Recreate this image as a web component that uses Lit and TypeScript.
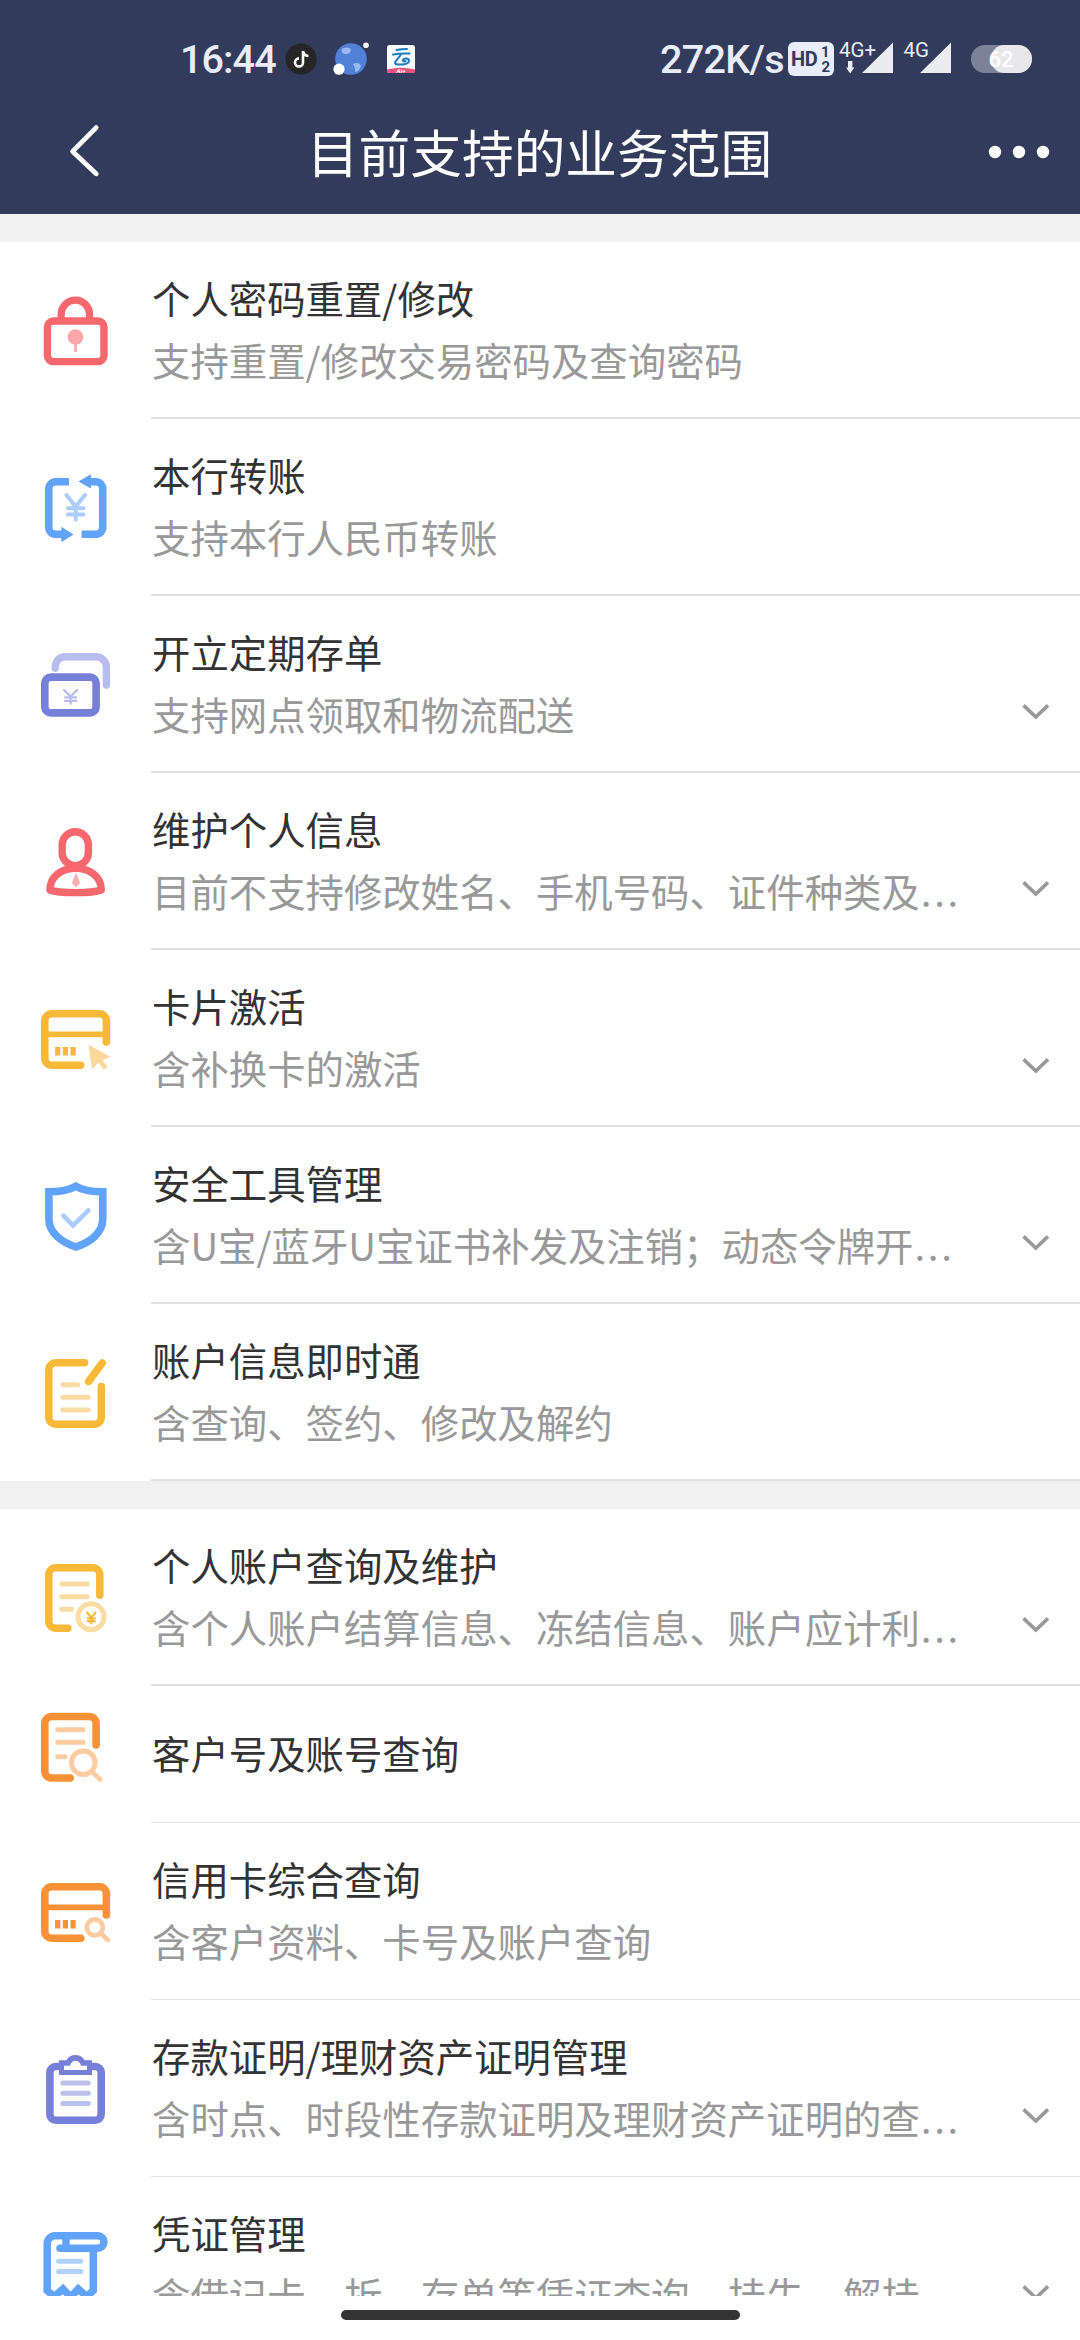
import { LitElement, html, svg, css, SVGTemplateResult } from "lit";
import { customElement, property } from "lit/decorators.js";

const yen = (cx: number, top: number, w: number, h: number, sw: number, color: string) => svg`
  <path d="M${cx - w / 2} ${top} L${cx} ${top + h * 0.48} L${cx + w / 2} ${top}
           M${cx} ${top + h * 0.48} V${top + h}
           M${cx - w * 0.42} ${top + h * 0.54} H${cx + w * 0.42}
           M${cx - w * 0.42} ${top + h * 0.8} H${cx + w * 0.42}"
    fill="none" stroke=${color} stroke-width=${sw} stroke-linecap="round" stroke-linejoin="round"/>`;

const bars = (rows: number[][], color: string, sw = 5) =>
  rows.map(([x1, x2, y]) => svg`<path d="M${x1} ${y} H${x2}" stroke=${color} stroke-width=${sw} stroke-linecap="round"/>`);

const card = (color: string) => svg`
  <path d="M73.4 46 V24.8 a7 7 0 0 0 -7 -7 H18.8 a7 7 0 0 0 -7 7 V62.2 a7 7 0 0 0 7 7 H47.8"
    fill="none" stroke=${color} stroke-width="7.6" stroke-linecap="round"/>
  <path d="M12 38.4 H73" stroke=${color} stroke-width="5.6"/>
  <path d="M22.1 51 h5.2 v8.4 h-5.2z M29.8 51 h5.2 v8.4 h-5.2z M37.5 51 h5.2 v8.4 h-5.2z" fill=${color}/>`;

const ICONS: Record<string, SVGTemplateResult> = {
  lock: svg`
    <path d="M28.2 32 V26.4 a14.2 14.2 0 0 1 28.4 0 V32" fill="none" stroke="#f6686d" stroke-width="7.2"/>
    <rect x="14.4" y="33" width="56.6" height="40.6" rx="6" fill="none" stroke="#f6686d" stroke-width="7.4"/>
    <circle cx="42.5" cy="49" r="7.8" fill="#fca6aa"/>
    <path d="M42.5 55 V64" stroke="#fca6aa" stroke-width="2.6"/>`,
  transfer: svg`
    <path d="M36 16.8 H22.8 a7 7 0 0 0 -7 7 V62.3 a7 7 0 0 0 7 7 H30" fill="none" stroke="#60a3f8" stroke-width="7.6"/>
    <path d="M28.3 61.7 L40.5 69.4 L28.3 77.3z M57.9 9.2 L45.5 16.4 L57.9 23.6z" fill="#60a3f8"/>
    <path d="M48.6 69.3 H62.7 a7 7 0 0 0 7 -7 V23.8 a7 7 0 0 0 -7 -7 H56" fill="none" stroke="#60a3f8" stroke-width="7.6"/>
    ${yen(42.7, 30, 18.5, 24.4, 4, "#abcdfb")}`,
  deposit: svg`
    <path d="M22.2 26.2 C22.2 18.5 26.5 14.8 32.5 14.8 H63 a10.4 10.4 0 0 1 10.4 10.4 V43" fill="none" stroke="#b8bdee" stroke-width="7.4" stroke-linecap="round"/>
    <rect x="11.8" y="35.1" width="51.3" height="35.8" rx="6" fill="#fff" stroke="#7780d9" stroke-width="7.6"/>
    ${yen(37.6, 48, 13, 13.6, 2.4, "#b8bdee")}`,
  person: svg`
    <rect x="29.2" y="12.8" width="26.2" height="34" rx="13.1" fill="none" stroke="#f6686d" stroke-width="7.4"/>
    <path d="M16.9 71 C16.9 57 29 49.4 42.6 49.4 S68.3 57 68.3 71 C59 74.5 26 74.5 16.9 71z" fill="none" stroke="#f6686d" stroke-width="7.4" stroke-linejoin="round"/>
    <path d="M43 53.5 L39 64 L43 68.4 L47 64z" fill="#fbadb0"/>`,
  activate: svg`
    ${card("#f8b938")}
    <path d="M55.5 48.8 L77.4 60.8 L69.6 64 L74.6 71 L70.6 73.4 L65.4 66.6 L59 73.6z" fill="#fad79b"/>`,
  shield: svg`
    <path d="M42.8 13.3 C34 18.6 24 18.8 15.9 18.8 V46 C15.9 60 29 69.6 42.8 74 C56.6 69.6 69.8 60 69.8 46 V18.8 C61.6 18.8 51.6 18.6 42.8 13.3z" fill="none" stroke="#60a3f8" stroke-width="7.6"/>
    <path d="M30.4 42.6 L40 52.4 L55.4 37.4" fill="none" stroke="#abcdfb" stroke-width="4.6" stroke-linecap="round"/>`,
  edit: svg`
    <path d="M51.6 12.8 H22.8 a7 7 0 0 0 -7 7 V67.2 a7 7 0 0 0 7 7 H61.3 a7 7 0 0 0 7 -7 V36.4" fill="none" stroke="#f8b938" stroke-width="7.5" stroke-linecap="round"/>
    <path d="M69.2 13 L55.6 31.4" stroke="#f8b938" stroke-width="7.5" stroke-linecap="round"/>
    ${bars([[29.8, 44.6, 34.7], [29.8, 55.2, 47.3], [29.8, 55.2, 60]], "#f9dca4")}`,
  account: svg`
    <path d="M66.8 40.2 V19.8 a7 7 0 0 0 -7 -7 H22.8 a7 7 0 0 0 -7 7 V66.2 a7 7 0 0 0 7 7 H34.8" fill="none" stroke="#f8b938" stroke-width="7.5" stroke-linecap="round"/>
    ${bars([[28.7, 54, 29], [28.7, 54, 41.7], [28.7, 38.5, 54.3]], "#f9dca4")}
    <circle cx="58" cy="61.7" r="13" fill="#fff" stroke="#f9dca4" stroke-width="5"/>
    ${yen(58.3, 57.4, 8.4, 11, 2.2, "#f8b938")}`,
  docsearch: svg`
    <path d="M63.1 41 V19.5 a7 7 0 0 0 -7 -7 H18.8 a7 7 0 0 0 -7 7 V67 a7 7 0 0 0 7 7 H37.2" fill="none" stroke="#f99237" stroke-width="7.6" stroke-linecap="round"/>
    ${bars([[24.7, 50, 25.7], [24.7, 50, 38.3], [24.7, 32, 52.7]], "#fbcba1")}
    <circle cx="50.3" cy="58.7" r="11.8" fill="#fff" stroke="#fbcba1" stroke-width="5"/>
    <path d="M59 67.4 L67 75.4" stroke="#fbcba1" stroke-width="4.8" stroke-linecap="round"/>`,
  cardsearch: svg`
    ${card("#f99237")}
    <circle cx="61.8" cy="58.4" r="8" fill="#fff" stroke="#fbcba1" stroke-width="4.8"/>
    <path d="M68 64.6 L74.8 71" stroke="#fbcba1" stroke-width="4.8" stroke-linecap="round"/>`,
  clipboard: svg`
    <rect x="16.9" y="20.5" width="51.3" height="53.7" rx="6" fill="none" stroke="#7780d9" stroke-width="7.6"/>
    <path d="M25.9 14.3 H33.4 C35.4 10.6 38.6 9 42.5 9 S49.6 10.6 51.6 14.3 H59 V29 H25.9z" fill="#7780d9"/>
    <path d="M31 19.8 H37 C38 16.2 39.6 14.8 42.5 14.8 S47 16.2 48 19.8 H54 V24 H31z" fill="#fff"/>
    ${bars([[29.8, 55.2, 37], [29.8, 55.2, 47.2], [29.8, 55.2, 57.4]], "#bbc0ec")}`,
  voucher: svg`
    <path d="M60.3 26 V67.4 L54 73.6 L45.2 66 L37.7 74 L30 66 L21 73.6 L14.2 67.4 V20.8 a8 8 0 0 1 8 -8 H64.8 a6.2 6.2 0 0 1 0 12.4 H27" fill="none" stroke="#60a3f8" stroke-width="7.5" stroke-linecap="round"/>
    <path d="M33 13 V25" stroke="#60a3f8" stroke-width="7.5"/>
    ${bars([[25.6, 47.8, 38.3], [25.6, 47.8, 48.6]], "#b1d2fa")}`,
};

interface Service {
  icon: string;
  title: string;
  desc?: string;
  cut?: boolean;
  expand?: boolean;
}

const GROUPS: { thin: boolean; items: Service[] }[] = [
  {
    thin: false,
    items: [
      { icon: "lock", title: "个人密码重置/修改", desc: "支持重置/修改交易密码及查询密码" },
      { icon: "transfer", title: "本行转账", desc: "支持本行人民币转账" },
      { icon: "deposit", title: "开立定期存单", desc: "支持网点领取和物流配送", expand: true },
      { icon: "person", title: "维护个人信息", desc: "目前不支持修改姓名、手机号码、证件种类及", cut: true, expand: true },
      { icon: "activate", title: "卡片激活", desc: "含补换卡的激活", expand: true },
      { icon: "shield", title: "安全工具管理", desc: "含U宝/蓝牙U宝证书补发及注销；动态令牌开", cut: true, expand: true },
      { icon: "edit", title: "账户信息即时通", desc: "含查询、签约、修改及解约" },
    ],
  },
  {
    thin: true,
    items: [
      { icon: "account", title: "个人账户查询及维护", desc: "含个人账户结算信息、冻结信息、账户应计利", cut: true, expand: true },
      { icon: "docsearch", title: "客户号及账号查询" },
      { icon: "cardsearch", title: "信用卡综合查询", desc: "含客户资料、卡号及账户查询" },
      { icon: "clipboard", title: "存款证明/理财资产证明管理", desc: "含时点、时段性存款证明及理财资产证明的查", cut: true, expand: true },
      { icon: "voucher", title: "凭证管理", desc: "含借记卡、折、存单等凭证查询、挂失、解挂", cut: true, expand: true },
    ],
  },
];

@customElement("service-row")
class ServiceRow extends LitElement {
  @property({ attribute: false }) item!: Service;
  @property({ type: Boolean }) thin = false;

  static styles = css`
    :host { display: block; }
    .row { display: flex; height: 177px; padding-left: 33px; box-sizing: border-box; }
    .row.single { height: 137px; }
    .icon { flex: none; width: 84px; height: 84px; margin: 46px 34px 0 0; }
    .single .icon { margin-top: 18px; }
    .body { flex: 1; min-width: 0; display: flex; padding-left: 1px; border-bottom: 2px solid #e0e0e0; }
    .thin .body { border-bottom: 1px solid #e4e4e4; }
    .text { flex: 1; min-width: 0; padding-top: 25px; font-size: 38.4px; line-height: 61px; white-space: nowrap; }
    .single .text { padding-top: 36px; }
    .title { color: #333; }
    .desc { color: #999; line-height: 62px; }
    .dots { letter-spacing: 2.7px; margin-left: 1px; }
    .chev { flex: none; width: 32px; height: 20px; margin: 106px 28px 0 0; }
  `;

  render() {
    const { icon, title, desc, cut, expand } = this.item;
    return html`
      <div class="row ${desc ? "" : "single"} ${this.thin ? "thin" : ""}">
        <svg class="icon" viewBox="0 0 84 84">${ICONS[icon]}</svg>
        <div class="body">
          <div class="text">
            <div class="title">${title}</div>
            ${desc ? html`<div class="desc">${desc}${cut ? html`<span class="dots">...</span>` : ""}</div>` : ""}
          </div>
          ${expand
            ? html`<svg class="chev" viewBox="0 0 32 20"><path d="M3.6 3.4 L15.8 15 L28 3.4" fill="none" stroke="#999" stroke-width="3.6"/></svg>`
            : ""}
        </div>
      </div>`;
  }
}

@customElement("app-root")
class AppRoot extends LitElement {
  static styles = css`
    :host {
      display: flex; flex-direction: column; width: 1080px; height: 2340px; overflow: hidden;
      background: #fff; font-family: "Noto Sans CJK SC", sans-serif;
    }
    .top { flex: none; height: 214px; background: #323b5b; display: flex; flex-direction: column; }
    .status { height: 34px; padding: 42px 48px 0 180px; display: flex; align-items: center; color: #e8edf9;
      font-family: Roboto, sans-serif; font-weight: 500; font-size: 39.5px; line-height: 34px; }
    .clock { width: 105px; letter-spacing: -0.9px; padding-top: 2px; }
    .apps { width: 132px; height: 34px; overflow: visible; }
    .net { margin-left: auto; width: 126px; letter-spacing: -0.7px; white-space: nowrap; padding-top: 2px; }
    .signals { flex: none; width: 246px; height: 34px; overflow: visible; }
    .nav { display: flex; align-items: center; height: 60px; padding: 45px 28px 0 66px; color: #fff; }
    .back { width: 36px; height: 60px; }
    .heading { flex: 1; text-align: center; font-size: 51.7px; line-height: 60px; padding-right: 5px; }
    .more { width: 70px; height: 60px; }
    .list { flex: none; height: 2082px; overflow: hidden; }
    .gap { height: 28px; background: #f1f1f1; }
    .home { flex: 1; display: flex; justify-content: center; padding-top: 14px; }
    .pill { width: 399px; height: 10px; border-radius: 5px; background: #333; }
  `;

  render() {
    return html`
      <div class="top">
        <div class="status">
          <span class="clock">16:44</span>
          <svg class="apps" viewBox="285 42 132 34">
            <circle cx="301" cy="59" r="15.6" fill="#262626"/>
            <path d="M303 51 V62.4 a4 4 0 1 1 -4 -4 M303 51 c0.4 3 2.4 4.8 5.4 5" fill="none" stroke="#fff" stroke-width="2.6"/>
            <circle cx="351" cy="59" r="15.8" fill="#5181d6"/>
            <path d="M342 49 c3 -2 7 -1 9 0 c0 3 -2 5 -5 5 c-3 0 -5 -2 -4 -5z M353 64 c4 -2 7 -1 8 2 c-1 3 -3 6 -6 6 c1 -3 -1 -5 -2 -8z" fill="#9db9ee"/>
            <circle cx="339" cy="69.2" r="5.6" fill="#fff"/>
            <circle cx="366" cy="45.2" r="2.8" fill="#fff"/>
            <rect x="387" y="45" width="28" height="28" rx="2.5" fill="#f7fbfe"/>
            <path d="M387 69.5 q14 -3.4 28 0 V71 a2 2 0 0 1 -2 2 H389 a2 2 0 0 1 -2 -2z" fill="#e8527c"/>
            <path d="M396.5 50 q5 -1 10.5 -1 M393 54.6 q8 -1.4 16.4 -1 M400.6 55 C398 58.6 393.6 62.6 395.6 64 C401 65.2 409 64.6 409 60.6 C408.6 57.4 402.8 58 403 60.6 q1 1.4 2.6 0.4" fill="none" stroke="#1c79bd" stroke-width="2" stroke-linecap="round"/>
            <text x="401" y="73" text-anchor="middle" font-size="6" font-weight="700" font-style="italic" fill="#fff">AI+</text>
          </svg>
          <span class="net">272K/s</span>
          <svg class="signals" viewBox="786 42 246 34">
            <rect x="788" y="42" width="46" height="34" rx="6" fill="#e8edf9"/>
            <text x="791" y="66" font-size="20" font-weight="700" letter-spacing="-0.3" fill="#323b5b">HD</text>
            <text x="821" y="57.4" font-size="15" font-weight="700" fill="#323b5b">1</text>
            <text x="821.4" y="71.8" font-size="15" font-weight="700" fill="#323b5b">2</text>
            <text x="839" y="57" font-size="20.5" font-weight="400" fill="#e8edf9">4G+</text>
            <path d="M848 61 h4.4 v6.6 h2 L850.2 73.4 L846 67.6 h2z" fill="#e8edf9"/>
            <path d="M893 42.4 V73 H862z M951 42.4 V73 H920z" fill="#ebecf0"/>
            <text x="903.4" y="57" font-size="20.5" font-weight="400" fill="#e8edf9">4G</text>
            <rect x="971" y="45" width="61" height="28" rx="14" fill="#7c8299"/>
            <path d="M991 59 C991 51 997 45 1004 45 H1018 a14 14 0 0 1 0 28 H1004 C997 73 991 67 991 59z" fill="#e8e8ea"/>
            <text x="988.6" y="66.8" font-size="22" font-weight="500" fill="#fff">62</text>
          </svg>
        </div>
        <div class="nav">
          <svg class="back" viewBox="66 121 36 60"><path d="M96.2 127.6 L72.6 151.4 L96.2 173.8" fill="none" stroke="#fff" stroke-width="4.8" stroke-linecap="round" stroke-linejoin="round"/></svg>
          <div class="heading">目前支持的业务范围</div>
          <svg class="more" viewBox="982 121 70 60">
            <circle cx="995" cy="152" r="6.2" fill="#fff"/><circle cx="1019" cy="152" r="6.2" fill="#fff"/><circle cx="1043" cy="152" r="6.2" fill="#fff"/>
          </svg>
        </div>
      </div>
      <div class="list">
        ${GROUPS.map((g) => html`
          <div class="gap"></div>
          ${g.items.map((item) => html`<service-row .item=${item} .thin=${g.thin && item.icon !== "account"}></service-row>`)}
        `)}
      </div>
      <div class="home"><div class="pill"></div></div>`;
  }
}
